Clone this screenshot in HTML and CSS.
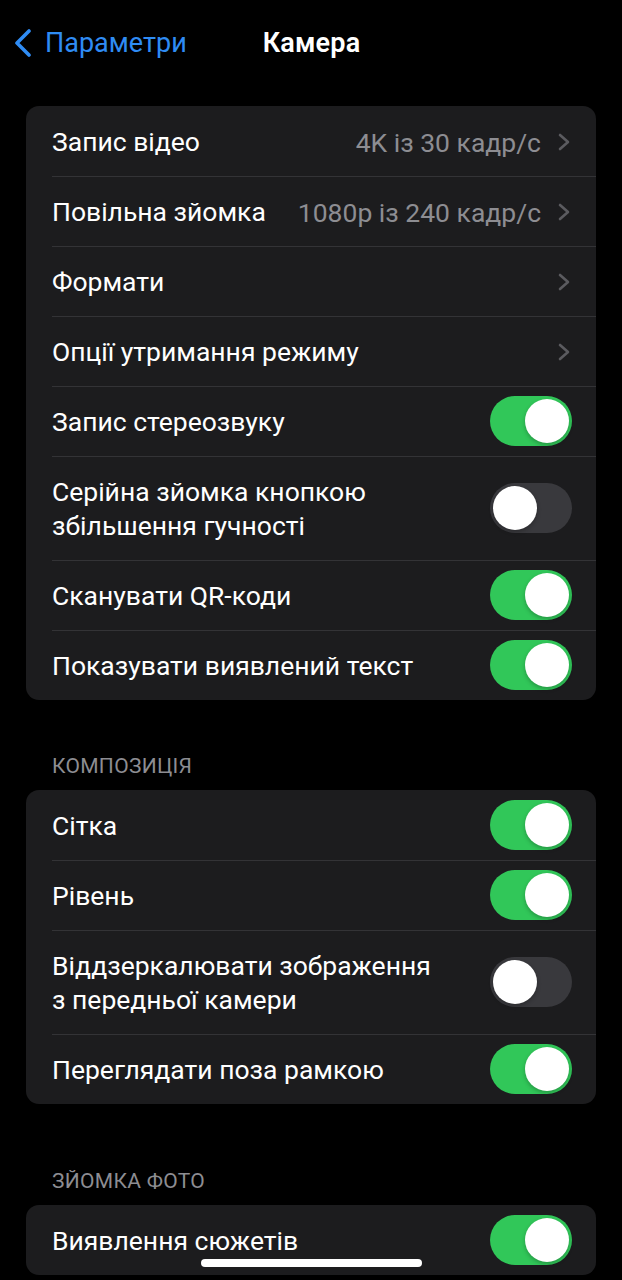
FILE: index.html
```html
<!DOCTYPE html>
<html lang="uk">
<head>
<meta charset="utf-8">
<title>Камера</title>
<link rel="stylesheet" href="styles.css">
</head>
<body>
<div class="screen">
  <header class="nav">
    <a class="back">
      <svg class="back-icon" width="20" height="28" viewBox="0 0 20 28"><path d="M16 2 L4 14 L16 26" fill="none" stroke="#2f8cf4" stroke-width="3.6" stroke-linecap="round" stroke-linejoin="round"/></svg>
      <span>Параметри</span>
    </a>
    <h1 class="title">Камера</h1>
  </header>

  <section class="group first">
    <div class="row"><span class="label">Запис відео</span><span class="value">4K із 30 кадр/с</span><svg class="chev" width="12" height="18" viewBox="0 0 12 18"><path d="M2 2 L10 9 L2 16" fill="none" stroke="#5b5b5f" stroke-width="2.6" stroke-linecap="round" stroke-linejoin="round"/></svg></div>
    <div class="row"><span class="label">Повільна зйомка</span><span class="value">1080p із 240 кадр/с</span><svg class="chev" width="12" height="18" viewBox="0 0 12 18"><path d="M2 2 L10 9 L2 16" fill="none" stroke="#5b5b5f" stroke-width="2.6" stroke-linecap="round" stroke-linejoin="round"/></svg></div>
    <div class="row"><span class="label">Формати</span><svg class="chev" width="12" height="18" viewBox="0 0 12 18"><path d="M2 2 L10 9 L2 16" fill="none" stroke="#5b5b5f" stroke-width="2.6" stroke-linecap="round" stroke-linejoin="round"/></svg></div>
    <div class="row"><span class="label">Опції утримання режиму</span><svg class="chev" width="12" height="18" viewBox="0 0 12 18"><path d="M2 2 L10 9 L2 16" fill="none" stroke="#5b5b5f" stroke-width="2.6" stroke-linecap="round" stroke-linejoin="round"/></svg></div>
    <div class="row"><span class="label">Запис стереозвуку</span><span class="toggle on"></span></div>
    <div class="row tall"><span class="label">Серійна зйомка кнопкою<br>збільшення гучності</span><span class="toggle"></span></div>
    <div class="row"><span class="label">Сканувати QR-коди</span><span class="toggle on"></span></div>
    <div class="row"><span class="label">Показувати виявлений текст</span><span class="toggle on"></span></div>
  </section>

  <h2 class="section-header">КОМПОЗИЦІЯ</h2>
  <section class="group">
    <div class="row"><span class="label">Сітка</span><span class="toggle on"></span></div>
    <div class="row"><span class="label">Рівень</span><span class="toggle on"></span></div>
    <div class="row tall"><span class="label">Віддзеркалювати зображення<br>з передньої камери</span><span class="toggle"></span></div>
    <div class="row"><span class="label">Переглядати поза рамкою</span><span class="toggle on"></span></div>
  </section>

  <h2 class="section-header wide">ЗЙОМКА ФОТО</h2>
  <section class="group">
    <div class="row"><span class="label">Виявлення сюжетів</span><span class="toggle on"></span></div>
  </section>

  <div class="home-indicator"></div>
</div>
</body>
</html>
```

FILE: styles.css
```css
* { box-sizing: border-box; }
html, body {
  margin: 0;
  padding: 0;
  background: #000;
}
body {
  font-family: Roboto, "Noto Sans", "Liberation Sans", sans-serif;
  color: #fff;
  width: 622px;
  height: 1280px;
  overflow: hidden;
}
.screen {
  position: relative;
  height: 1280px;
  padding: 0 26px;
}
.nav {
  position: relative;
  height: 86px;
  display: flex;
  align-items: center;
  justify-content: center;
}
.back {
  position: absolute;
  left: -13px;
  top: 0;
  height: 86px;
  display: flex;
  align-items: center;
  gap: 12px;
  color: #2f8cf4;
  font-size: 27px;
}
.back-icon { display: block; margin-top: 0; }
.title {
  margin: 0 0 0 1px;
  font-size: 27px;
  font-weight: 600;
  letter-spacing: 0.2px;
}
.group {
  background: #1c1c1e;
  border-radius: 13px;
  overflow: hidden;
}
.group.first { margin-top: 20px; }
.row {
  height: 70px;
  display: flex;
  align-items: center;
  padding: 2px 25px 0 26px;
  position: relative;
}
.row + .row::before {
  content: "";
  position: absolute;
  left: 26px;
  right: 0;
  top: 0;
  height: 1px;
  background: #333336;
}
.row.tall { height: 104px; }
.label {
  flex: 1;
  font-size: 26.5px;
  line-height: 34px;
  white-space: nowrap;
}
.value {
  font-size: 26.5px;
  color: #8d8d92;
  margin-right: 17px;
}
.chev {
  display: block;
  margin-right: 1px;
}
.toggle {
  width: 82px;
  height: 50px;
  border-radius: 25px;
  background: #39393d;
  position: relative;
  margin-right: -1px;
  margin-top: -2px;
}
.toggle::after {
  content: "";
  position: absolute;
  top: 3px;
  left: 3px;
  width: 44px;
  height: 44px;
  border-radius: 50%;
  background: #fff;
  box-shadow: 0 2px 4px rgba(0,0,0,0.25);
}
.toggle.on { background: #31c759; }
.toggle.on::after { left: 35px; }
.section-header {
  margin: 0;
  padding: 54px 26px 12px;
  font-size: 21px;
  line-height: 24px;
  font-weight: 400;
  color: #8d8d92;
  letter-spacing: 0.3px;
}
.section-header.wide { padding-top: 65px; padding-bottom: 12px; }
.home-indicator {
  position: absolute;
  left: 201px;
  top: 1259px;
  width: 221px;
  height: 8px;
  border-radius: 4px;
  background: #fff;
}
```
